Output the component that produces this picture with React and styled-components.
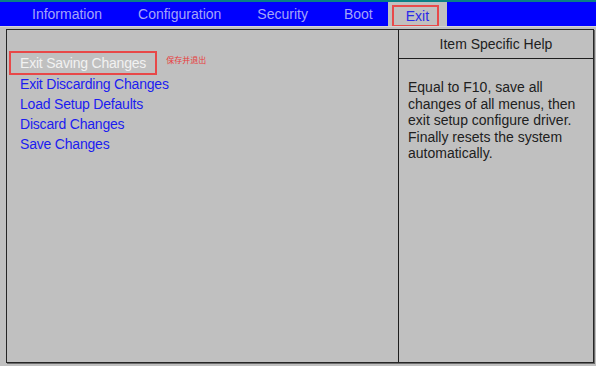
import React from "react";
import styled, { createGlobalStyle } from "styled-components";

const GlobalStyle = createGlobalStyle`
  html, body {
    margin: 0;
    padding: 0;
    background: #c0c0c0;
  }
  body {
    font-family: "Liberation Sans", Arial, sans-serif;
    font-size: 14px;
  }
`;

const Screen = styled.div`
  width: 596px;
  height: 366px;
  display: flex;
  flex-direction: column;
  background: #c0c0c0;
  overflow: hidden;
`;

const MenuBar = styled.nav`
  height: 24px;
  border-top: 2px solid #0a7f86;
  background: #0000ff;
  display: flex;
  align-items: stretch;
  padding-left: 14px;
  border-bottom: 1px solid #d4d4d4;
`;

const Tab = styled.div`
  display: flex;
  align-items: center;
  padding: 0 ${(p) => (p.$active ? "8px 0 4px" : "18px")};
  margin-left: ${(p) => (p.$active ? "-3px" : "0")};
  color: ${(p) => (p.$active ? "#2a2ae8" : "#a4a4f8")};
  background: ${(p) => (p.$active ? "#c0c0c0" : "transparent")};
  font-size: 14px;
`;

const TabMark = styled.span`
  align-self: stretch;
  display: flex;
  align-items: center;
  margin-top: 3px;
  padding: 0 8px 0 12px;
  border: 2px solid #e84a4a;
  border-bottom-width: 1.5px;
`;

const Panel = styled.div`
  margin: 2px 2px 3px 6px;
  flex: 1;
  display: grid;
  grid-template-columns: 391px 1fr;
  border: 1px solid #262626;
  box-shadow: 1px 1px 0 #6a6a6a;
`;

const MenuList = styled.ul`
  list-style: none;
  margin: 0;
  padding: 24px 0 0 13px;
  letter-spacing: -0.2px;
`;

const Item = styled.li`
  line-height: 20px;
  height: 20px;
  color: #1c1cf0;
  white-space: nowrap;
`;

const Selected = styled.span`
  display: inline-block;
  margin-left: -10px;
  padding: 0 10px;
  color: #f2f2f2;
  outline: 2px solid #e84848;
  outline-offset: -1px;
  height: 22px;
  line-height: 22px;
  margin-top: -2px;
  vertical-align: top;
`;

const Note = styled.span`
  display: inline-block;
  vertical-align: top;
  margin: -4px 0 0 10px;
  font-family: "Noto Sans CJK SC", sans-serif;
  font-size: 8px;
  letter-spacing: 0;
  color: #e83c3c;
`;

const HelpColumn = styled.aside`
  border-left: 1px solid #1e1e1e;
  display: flex;
  flex-direction: column;
`;

const HelpHeader = styled.div`
  height: 28px;
  border-bottom: 1px solid #1e1e1e;
  display: flex;
  align-items: center;
  justify-content: center;
  color: #202020;
`;

const HelpText = styled.p`
  margin: 0;
  padding: 20px 0 0 9px;
  line-height: 16.5px;
  color: #202020;
`;

const tabs = ["Information", "Configuration", "Security", "Boot"];
const items = [
  "Exit Discarding Changes",
  "Load Setup Defaults",
  "Discard Changes",
  "Save Changes",
];

export default function App() {
  return (
    <Screen>
      <GlobalStyle />
      <MenuBar>
        {tabs.map((t) => (
          <Tab key={t}>{t}</Tab>
        ))}
        <Tab $active>
          <TabMark>Exit</TabMark>
        </Tab>
      </MenuBar>
      <Panel>
        <MenuList>
          <Item>
            <Selected>Exit Saving Changes</Selected>
            <Note>保存并退出</Note>
          </Item>
          {items.map((i) => (
            <Item key={i}>{i}</Item>
          ))}
        </MenuList>
        <HelpColumn>
          <HelpHeader>Item Specific Help</HelpHeader>
          <HelpText>
            Equal to F10, save all
            <br />
            changes of all menus, then
            <br />
            exit setup configure driver.
            <br />
            Finally resets the system
            <br />
            automatically.
          </HelpText>
        </HelpColumn>
      </Panel>
    </Screen>
  );
}
